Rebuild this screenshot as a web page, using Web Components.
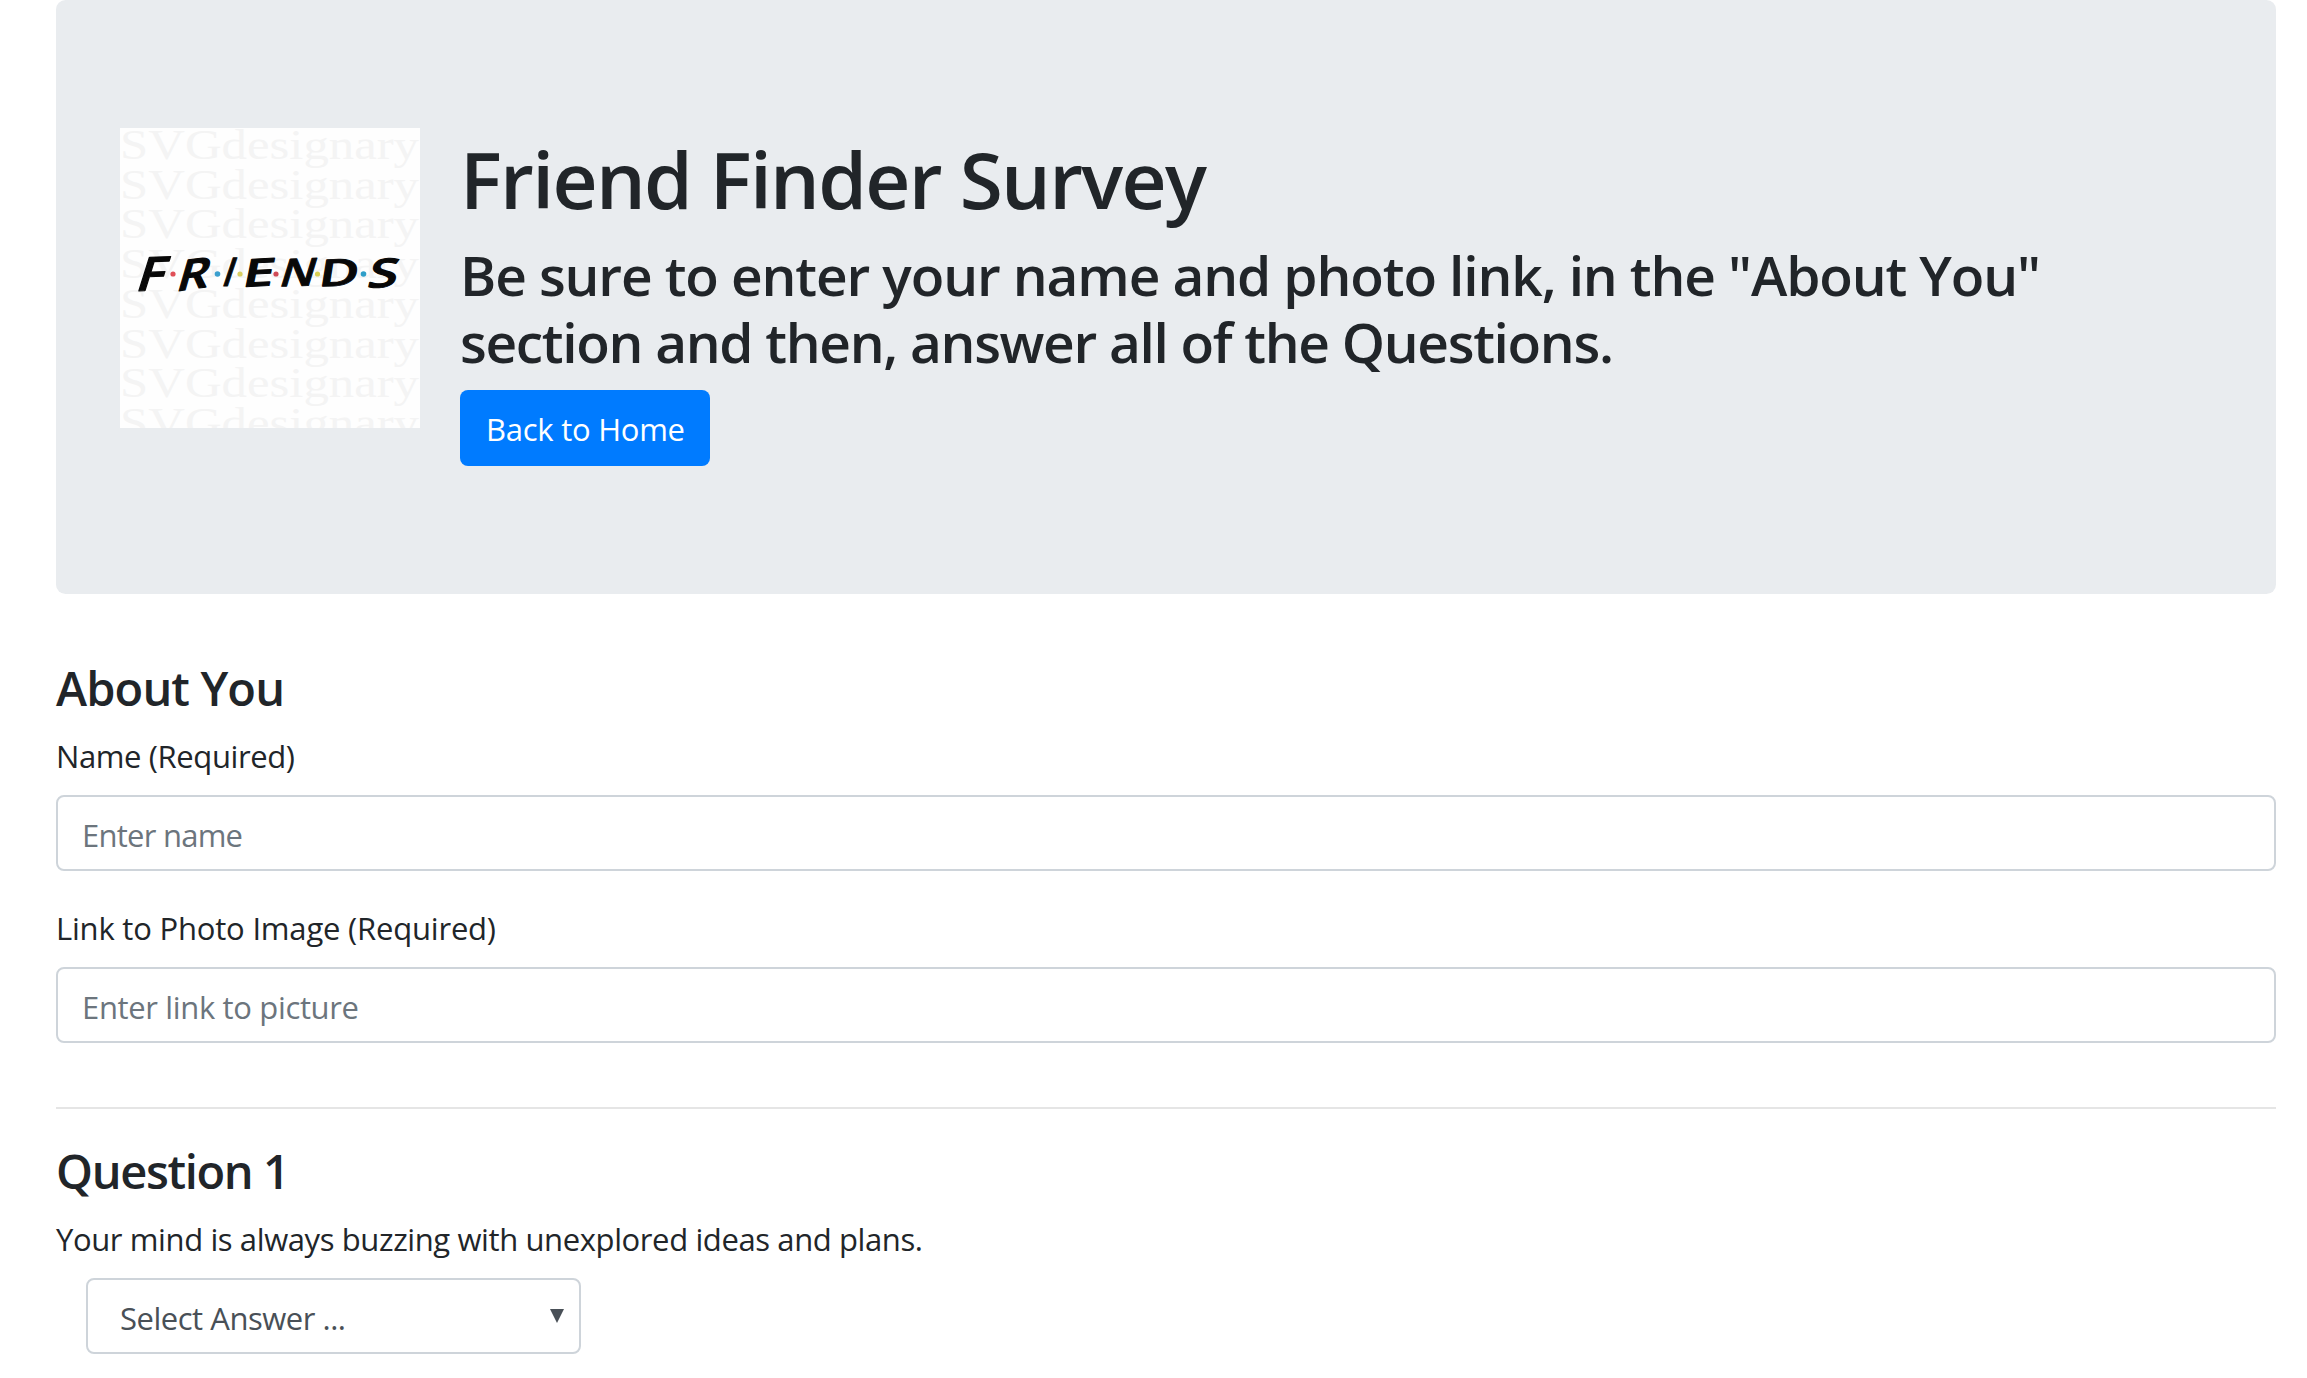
<!DOCTYPE html>
<html lang="en">
<head>
<meta charset="utf-8">
<title>Friend Finder Survey</title>
<style>
html,body{margin:0;background:#fff}
body{font-family:"Open Sans","Noto Sans",sans-serif;color:#212529;height:1378px;overflow:hidden}
</style>
</head>
<body>
<survey-page></survey-page>
<script>
const define = (name, html, init) => customElements.define(name, class extends HTMLElement {
  connectedCallback() {
    if (this.shadowRoot) return;
    this.attachShadow({mode: 'open'}).innerHTML = html;
    if (init) init(this, this.shadowRoot);
  }
});

/* One line of text, tracked so that it spans the given width. */
define('text-line', `
<style>
:host{display:block;box-sizing:border-box;height:48px;line-height:48px;padding-top:1px;font-size:31px}
:host([kind=title]){height:96px;line-height:96px;font-size:78.4px;font-weight:600;padding-top:3px}
:host([kind=lead]){height:67.2px;line-height:67.2px;font-size:55px;font-weight:600;padding-top:1px}
:host([kind=section]){height:57.6px;line-height:57.6px;font-size:47px;font-weight:600;padding-top:2.4px}
span{display:inline-block;white-space:nowrap;vertical-align:top}
</style><span><slot></slot></span>`, (host, root) => {
  const span = root.querySelector('span');
  const n = host.textContent.length;
  const natural = span.getBoundingClientRect().width;
  span.style.letterSpacing = ((+host.getAttribute('width') - natural) / (n - 1)) + 'px';
});

define('show-logo', `
<style>:host{display:block;flex:none;width:300px;height:300px}svg{display:block}
.mark{font:42px "Liberation Serif",serif;fill:#f4f4f4}
.name{font:600 35px "Open Sans",sans-serif;fill:#080808;stroke:#080808;stroke-width:.9;stroke-linejoin:round}
</style>
<svg width="300" height="300" viewBox="0 0 300 300">
<rect width="300" height="300" fill="#fefefe"/>
<g class="mark"></g>
<g class="name">
<text transform="matrix(1.5 -.06 -.42 1.34 14 163)">F</text>
<text transform="matrix(1.42 -.2 -.36 1.24 54.500 163.5)">R</text>
<text transform="matrix(.95 0 -.38 1.13 100.500 158)">I</text>
<text transform="matrix(1.6 -.08 -.22 1.1 121 159)">E</text>
<text transform="matrix(1.28 -.04 -.34 1.1 157.5 158.500)">N</text>
<text transform="matrix(1.55 -.05 -.17 1.07 197.5 158.5)">D</text>
<text transform="matrix(1.55 -.08 -.25 1.14 246 160)">S</text>
</g>
<circle cx="53" cy="146" r="2.6" fill="#e05058"/><circle cx="97.500" cy="146" r="2.800" fill="#3b9fce"/>
<circle cx="120" cy="146" r="2.600" fill="#d9cf62"/><circle cx="156" cy="146" r="2.600" fill="#d04b56"/>
<circle cx="197.500" cy="146" r="2.600" fill="#d9cf55"/><circle cx="243.500" cy="146" r="2.800" fill="#2f9fc9"/>
</svg>`, (host, root) => {
  root.querySelector('.mark').innerHTML = Array.from({length: 8}, (_, i) =>
    `<text x="0" y="${31 + i * 39.700}" textLength="299" lengthAdjust="spacingAndGlyphs">SVGdesignary</text>`).join('');
});

define('home-button', `
<style>:host{display:block;box-sizing:border-box;width:250px;height:76px;padding:14px 26px;margin-top:16px;border-radius:8px;background:#007bff;color:#fff}
</style><text-line width="199">Back to Home</text-line>`);

define('survey-hero', `
<style>:host{display:flex;gap:40px;box-sizing:border-box;height:594px;padding:128px 64px;background:#e9ecef;border-radius:9.6px}
.lead{margin-top:16px}</style>
<show-logo></show-logo>
<div>
<text-line kind="title" width="747">Friend Finder Survey</text-line>
<div class="lead">
<text-line kind="lead" width="1581">Be sure to enter your name and photo link, in the "About You"</text-line>
<text-line kind="lead" width="1154">section and then, answer all of the Questions.</text-line>
</div>
<home-button></home-button>
</div>`);

define('text-field', `
<style>:host{display:block}
.box{box-sizing:border-box;height:76px;margin-top:16px;border:2px solid #ced4da;border-radius:8px;padding:13px 24px;color:#6c757d;background:#fff}
</style><slot name="label"></slot><div class="box"><slot name="placeholder"></slot></div>`);

define('answer-select', `
<style>:host{display:flex;justify-content:space-between;align-items:flex-start;box-sizing:border-box;width:495px;height:76px;margin:16.400px 0 0 30px;border:2px solid #ced4da;border-radius:8px;padding:13px 15px 11px 32px;color:#495057;background:#fff}
svg{display:block;margin-top:16px}</style>
<slot></slot><svg width="14" height="14"><path d="M0 0H14L7 14Z" fill="#495057"/></svg>`);

define('survey-page', `
<style>:host{display:block;padding:0 31px 0 56px}
.about{display:flex;flex-direction:column;padding-top:63.400px}
.about text-field{margin-top:16px}.about text-field+text-field{margin-top:32px}
hr{margin:64px 0 32px;border:0;border-top:2px solid rgba(0,0,0,.1)}
.prompt{margin-top:15px}</style>
<survey-hero></survey-hero>
<section class="about">
<text-line kind="section" width="229">About You</text-line>
<text-field><text-line slot="label" width="239">Name (Required)</text-line><text-line slot="placeholder" width="161">Enter name</text-line></text-field>
<text-field><text-line slot="label" width="440">Link to Photo Image (Required)</text-line><text-line slot="placeholder" width="277">Enter link to picture</text-line></text-field>
</section>
<hr>
<section>
<text-line kind="section" width="234">Question 1</text-line>
<text-line class="prompt" width="867">Your mind is always buzzing with unexplored ideas and plans.</text-line>
<answer-select><text-line width="226">Select Answer ...</text-line></answer-select>
</section>`);
</script>
</body>
</html>
